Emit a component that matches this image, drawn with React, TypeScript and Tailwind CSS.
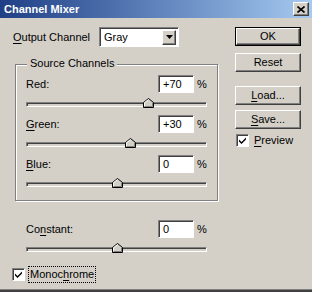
import React from "react";

const raised =
  "border border-t-white border-l-white border-b-[#404040] border-r-[#404040] shadow-[inset_-1px_-1px_0_#808080]";
const sunken =
  "border border-t-[#808080] border-l-[#808080] border-b-white border-r-white shadow-[inset_1px_1px_0_#404040]";

const Mn = ({ children }: { children: React.ReactNode }) => <span className="underline underline-offset-2">{children}</span>;

const Thumb = () => (
  <svg width="11" height="10" viewBox="0 0 11 10" className="block">
    <path d="M0.5 9.5V4.5L5.5 0.5L10.5 4.5V9.5Z" fill="#d4d0c8" stroke="#000" />
    <path d="M1.5 8.5V4.8L5.5 1.6" fill="none" stroke="#fff" />
    <path d="M1.5 8.5H9.5V4.8" fill="none" stroke="#808080" />
  </svg>
);

const Slider = ({ value }: { value: number }) => {
  const pos = Math.round(((value + 200) / 400) * 181);
  return (
    <div className="relative mt-[5px] h-[11px] w-[181px]">
      <div className={`absolute left-0 right-0 top-[4px] h-[5px] bg-[#d4d0c8] ${sunken}`} />
      <div className="absolute top-0" style={{ left: pos - 5 }}>
        <Thumb />
      </div>
    </div>
  );
};

const ValueRow = ({ label, value }: { label: React.ReactNode; value: string }) => (
  <div className="flex h-[18px] w-[181px] items-center">
    <span className="flex-1">{label}</span>
    <div className={`flex h-[18px] w-[36px] items-center bg-white pl-[4px] ${sunken}`}>{value}</div>
    <span className="w-[13px] pl-[3px]">%</span>
  </div>
);

const Check = () => (
  <div className={`flex h-[13px] w-[13px] items-center justify-center bg-white ${sunken}`}>
    <svg width="7" height="7" viewBox="0 0 7 7">
      <path d="M0 2.5L2.5 5L7 0.5V2.5L2.5 7L0 4.5Z" fill="#000" />
    </svg>
  </div>
);

const Button = ({ children, def = false, className = "" }: { children: React.ReactNode; def?: boolean; className?: string }) => (
  <div className={`h-[19px] w-[66px] ${def ? "border border-black" : ""} ${className}`}>
    <div className={`flex h-full w-full items-center justify-center bg-[#d4d0c8] ${raised}`}>{children}</div>
  </div>
);

export default function App() {
  return (
    <div
      className="h-[292px] w-[312px] overflow-hidden border-b-2 border-[#404040] bg-[#d4d0c8] text-[11px] leading-none text-black shadow-[inset_0_-1px_0_#808080]"
      style={{ fontFamily: '"Liberation Sans", Arial, sans-serif' }}
    >
      {/* Title bar */}
      <div className="flex h-[18px] items-center justify-between bg-gradient-to-r from-[#203f86] to-[#a6caf0] pl-[4px] pr-[3px]">
        <span className="text-[11px] font-bold text-white">Channel Mixer</span>
        <div className={`flex h-[14px] w-[16px] items-center justify-center bg-[#d4d0c8] ${raised}`}>
          <svg width="8" height="7" viewBox="0 0 8 7">
            <path d="M0.5 0.5L7.5 6.5M7.5 0.5L0.5 6.5" stroke="#000" strokeWidth="1.6" />
          </svg>
        </div>
      </div>

      <div className="flex">
        {/* Left column */}
        <div className="w-[220px] pt-[9px]">
          <div className="flex h-[20px] items-center pl-[13px]">
            <span className="w-[86px]">
              <Mn>O</Mn>utput Channel
            </span>
            <div className={`flex h-[20px] w-[80px] items-center bg-white pl-[4px] pr-[2px] ${sunken}`}>
              <span className="flex-1">Gray</span>
              <div className={`flex h-[15px] w-[14px] items-center justify-center bg-[#d4d0c8] ${raised}`}>
                <svg width="7" height="4" viewBox="0 0 7 4">
                  <path d="M0 0H7L3.5 4Z" fill="#000" />
                </svg>
              </div>
            </div>
          </div>

          {/* Source Channels group */}
          <div className="relative ml-[15px] mt-[17px] w-[203px] border border-[#808080] pb-[11px] pl-[10px] pt-[10px] shadow-[inset_1px_1px_0_#fff,1px_1px_0_#fff]">
            <span className="absolute left-[11px] top-[-7px] bg-[#d4d0c8] px-[3px]">Source Channels</span>
            <ValueRow label="Red:" value="+70" />
            <Slider value={70} />
            <div className="mt-[6px]">
              <ValueRow label={<><Mn>G</Mn>reen:</>} value="+30" />
            </div>
            <Slider value={30} />
            <div className="mt-[6px]">
              <ValueRow label={<><Mn>B</Mn>lue:</>} value="0" />
            </div>
            <Slider value={0} />
          </div>

          <div className="mt-[19px] pl-[26px]">
            <ValueRow label={<>Co<Mn>n</Mn>stant:</>} value="0" />
            <Slider value={0} />
          </div>

          <div className="ml-[12px] mt-[12px] flex items-center gap-[3px]">
            <Check />
            <span className="border border-dotted border-black px-[1px] py-[2px]">
              Monoc<Mn>h</Mn>rome
            </span>
          </div>
        </div>

        {/* Right column */}
        <div className="flex flex-col pl-[15px] pt-[9px]">
          <Button def>OK</Button>
          <Button className="mt-[7px]">Reset</Button>
          <Button className="mt-[14px]">
            <span>
              <Mn>L</Mn>oad...
            </span>
          </Button>
          <Button className="mt-[5px]">
            <span>
              <Mn>S</Mn>ave...
            </span>
          </Button>
          <div className="ml-[1px] mt-[5px] flex items-center gap-[5px]">
            <Check />
            <span>
              <Mn>P</Mn>review
            </span>
          </div>
        </div>
      </div>
    </div>
  );
}
